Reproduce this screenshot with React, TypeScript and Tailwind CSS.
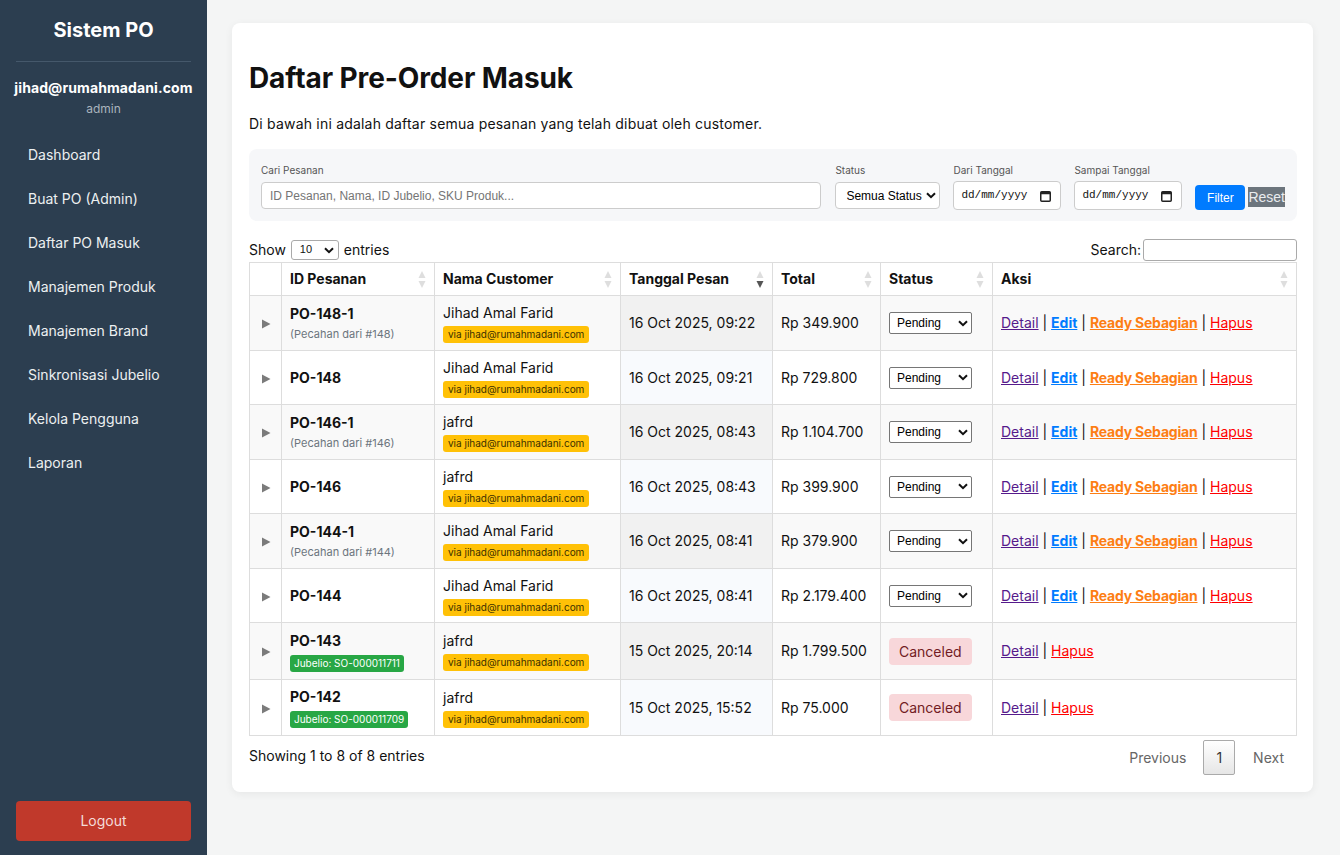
type Row = {
  id: string;
  sub?: string;
  jubelio?: string;
  name: string;
  date: string;
  total: string;
  canceled?: boolean;
  h: string;
};

const rows: Row[] = [
  { id: "PO-148-1", sub: "(Pecahan dari #148)", name: "Jihad Amal Farid", date: "16 Oct 2025, 09:22", total: "Rp 349.900", h: "h-[55px]" },
  { id: "PO-148", name: "Jihad Amal Farid", date: "16 Oct 2025, 09:21", total: "Rp 729.800", h: "h-[54px]" },
  { id: "PO-146-1", sub: "(Pecahan dari #146)", name: "jafrd", date: "16 Oct 2025, 08:43", total: "Rp 1.104.700", h: "h-[55px]" },
  { id: "PO-146", name: "jafrd", date: "16 Oct 2025, 08:43", total: "Rp 399.900", h: "h-[54px]" },
  { id: "PO-144-1", sub: "(Pecahan dari #144)", name: "Jihad Amal Farid", date: "16 Oct 2025, 08:41", total: "Rp 379.900", h: "h-[55px]" },
  { id: "PO-144", name: "Jihad Amal Farid", date: "16 Oct 2025, 08:41", total: "Rp 2.179.400", h: "h-[54px]" },
  { id: "PO-143", jubelio: "SO-000011711", name: "jafrd", date: "15 Oct 2025, 20:14", total: "Rp 1.799.500", canceled: true, h: "h-[57px]" },
  { id: "PO-142", jubelio: "SO-000011709", name: "jafrd", date: "15 Oct 2025, 15:52", total: "Rp 75.000", canceled: true, h: "h-[56px]" },
];

const menu = [
  "Dashboard",
  "Buat PO (Admin)",
  "Daftar PO Masuk",
  "Manajemen Produk",
  "Manajemen Brand",
  "Sinkronisasi Jubelio",
  "Kelola Pengguna",
  "Laporan",
];

function Chevron() {
  return (
    <svg width="10" height="7" viewBox="0 0 10 7" fill="none">
      <path d="M1 1.2 5 5.2 9 1.2" stroke="#111" strokeWidth="2" />
    </svg>
  );
}

function CalendarIcon() {
  return (
    <svg width="11" height="12" viewBox="0 0 11 12" fill="none">
      <rect x="0.75" y="1.75" width="9.5" height="9.5" rx="1" stroke="#222" strokeWidth="1.5" />
      <rect x="0.75" y="1.75" width="9.5" height="2.5" fill="#222" />
    </svg>
  );
}

function SortIcon({ active }: { active?: boolean }) {
  return (
    <svg width="8" height="17" viewBox="0 0 8 17">
      <path d="M4 0 7.5 7H0.5Z" fill="#dedede" />
      <path d="M4 17 7.5 10H0.5Z" fill={active ? "#555" : "#dedede"} />
    </svg>
  );
}

function DateField({ label }: { label: string }) {
  return (
    <div className="w-[108px] mb-[-1px]">
      <div className="text-[10px] leading-[14px] text-[#555]">{label}</div>
      <div className="mt-[4px] h-[29px] border border-[#ccc] rounded-[4px] bg-white flex items-center justify-between pl-[7px] pr-[9px]">
        <span className="font-['Liberation_Mono',monospace] text-[11px] text-[#111]">dd/mm/yyyy</span>
        <CalendarIcon />
      </div>
    </div>
  );
}

function Th({ children, active, sort = true, w }: { children?: React.ReactNode; active?: boolean; sort?: boolean; w: string }) {
  return (
    <th className={`${w} border border-[#ddd] px-2 text-left font-bold text-sm`}>
      <div className="flex items-center justify-between">
        <span>{children}</span>
        {sort && <SortIcon active={active} />}
      </div>
    </th>
  );
}

export default function App() {
  return (
    <div className="flex h-[855px] font-['Inter',sans-serif] text-[#111]">
      <aside className="w-[207px] shrink-0 bg-[#2c3e50] px-4 flex flex-col text-white">
        <div className="pt-4 text-xl leading-7 font-bold text-center">Sistem PO</div>
        <div className="mt-[17px] border-t border-[#45586b]" />
        <div className="mt-[16px] text-center text-sm leading-5 font-bold tracking-[0.1px] whitespace-nowrap -mx-3">jihad@rumahmadani.com</div>
        <div className="mt-[3px] text-center text-xs leading-4 text-[#aab4bd]">admin</div>
        <nav className="mt-[16px] flex flex-col">
          {menu.map((m) => (
            <a key={m} className="px-3 py-3 text-sm leading-5 text-[#ecf0f1]">
              {m}
            </a>
          ))}
        </nav>
        <button className="mt-auto mb-[14px] h-[40px] rounded-[4px] bg-[#c0392b] text-sm text-[#f4dcd9]">Logout</button>
      </aside>

      <main className="flex-1 bg-[#f4f5f5] pl-[25px] pr-[27px] pt-[23px]">
        <div className="bg-white rounded-lg shadow-[0_2px_8px_rgba(0,0,0,0.06)] pl-[17px] pr-4 pt-[38px] pb-[17px]">
          <h1 className="text-[28px] leading-[34px] font-bold tracking-[-0.1px]">Daftar Pre-Order Masuk</h1>
          <p className="mt-[19px] text-sm leading-5 tracking-[0.2px]">Di bawah ini adalah daftar semua pesanan yang telah dibuat oleh customer.</p>

          <div className="mt-[15px] bg-[#f6f7f9] rounded-lg px-3 pt-[14px] pb-[12px] flex items-end gap-[13px]">
            <div className="flex-1 mr-[1px]">
              <div className="text-[10px] leading-[14px] text-[#555]">Cari Pesanan</div>
              <div className="mt-[5px] h-[27px] border border-[#ccc] rounded-[4px] bg-white flex items-center px-2 font-['Liberation_Sans',Arial,sans-serif] text-xs text-[#757575]">
                ID Pesanan, Nama, ID Jubelio, SKU Produk...
              </div>
            </div>
            <div className="w-[105px]">
              <div className="text-[10px] leading-[14px] text-[#555]">Status</div>
              <div className="mt-[5px] h-[27px] border border-[#ccc] rounded-[4px] bg-white flex items-center justify-between pl-[10px] pr-[3px] font-['Liberation_Sans',Arial,sans-serif] text-xs text-black">
                <span>Semua Status</span>
                <Chevron />
              </div>
            </div>
            <DateField label="Dari Tanggal" />
            <DateField label="Sampai Tanggal" />
            <div className="flex items-end gap-[3px] mb-[-1px]">
              <button className="w-[50px] h-[25px] rounded-[4px] bg-[#007bff] text-white text-xs font-['Liberation_Sans',Arial,sans-serif]">Filter</button>
              <button className="h-[20px] mb-[3px] bg-[#6c757d] text-[#e9ecef] text-sm leading-[20px] font-['Liberation_Sans',Arial,sans-serif]">Reset</button>
            </div>
          </div>

          <div className="mt-[18px] flex items-center justify-between h-[22px] text-sm">
            <div className="flex items-center gap-[5px]">
              <span>Show</span>
              <div className="w-[48px] h-[20px] border border-[#aaa] rounded-[3px] flex items-center justify-between pl-[8px] pr-[4px] font-['Liberation_Sans',Arial,sans-serif] text-[11px]">
                <span>10</span>
                <Chevron />
              </div>
              <span>entries</span>
            </div>
            <div className="flex items-center gap-[2px]">
              <span>Search:</span>
              <div className="w-[154px] h-[22px] border border-[#aaa] rounded-[3px]" />
            </div>
          </div>

          <table className="mt-[1px] w-full table-fixed border-collapse text-sm">
            <thead>
              <tr className="h-[33px]">
                <th className="w-[32px] border border-[#ddd]" />
                <Th w="w-[153px]">ID Pesanan</Th>
                <Th w="w-[186px]">Nama Customer</Th>
                <Th w="w-[152px]" active>Tanggal Pesan</Th>
                <Th w="w-[108px]">Total</Th>
                <Th w="w-[112px]">Status</Th>
                <Th w="w-auto">Aksi</Th>
              </tr>
            </thead>
            <tbody>
              {rows.map((r, i) => {
                const odd = i % 2 === 0;
                return (
                  <tr key={r.id} className={`${r.h} ${odd ? "bg-[#f9f9f9]" : "bg-white"}`}>
                    <td className="border border-[#ddd] text-center align-middle">
                      <svg width="10" height="10" viewBox="0 0 10 10" className="inline-block">
                        <path d="M1 0.5 9.5 5 1 9.5Z" fill="#7b7b7b" />
                      </svg>
                    </td>
                    <td className="border border-[#ddd] px-2 align-middle">
                      <div className="font-bold leading-5">{r.id}</div>
                      {r.sub && <div className="mt-[2px] text-[11px] leading-4 text-[#6c757d]">{r.sub}</div>}
                      {r.jubelio && (
                        <span className="inline-block mt-[4px] rounded-[3px] bg-[#28a745] px-[4px] text-[10px] leading-[17px] text-white">
                          Jubelio: {r.jubelio}
                        </span>
                      )}
                    </td>
                    <td className="border border-[#ddd] px-2 align-middle">
                      <div className="leading-5">{r.name}</div>
                      <span className="inline-block mt-[2px] rounded-[3px] bg-[#ffc107] px-[5px] text-[10px] leading-[17px] text-[#3b3000]">
                        via jihad@rumahmadani.com
                      </span>
                    </td>
                    <td className={`border border-[#ddd] px-2 align-middle ${odd ? "bg-[#f1f1f1]" : "bg-[#f8fafd]"}`}>{r.date}</td>
                    <td className="border border-[#ddd] px-2 align-middle">{r.total}</td>
                    <td className="border border-[#ddd] px-2 align-middle">
                      {r.canceled ? (
                        <span className="inline-block rounded-[4px] bg-[#f8d7da] px-[10px] leading-[27px] text-[#721c24]">Canceled</span>
                      ) : (
                        <div className="w-[83px] h-[22px] border border-[#767676] rounded-[2px] bg-white flex items-center justify-between pl-[7px] pr-[3px] font-['Liberation_Sans',Arial,sans-serif] text-xs text-black">
                          <span>Pending</span>
                          <Chevron />
                        </div>
                      )}
                    </td>
                    <td className="border border-[#ddd] px-2 align-middle whitespace-nowrap">
                      <a className="underline text-[#551a8b]">Detail</a>
                      {" | "}
                      {!r.canceled && (
                        <>
                          <a className="underline font-bold text-[#007bff]">Edit</a>
                          {" | "}
                          <a className="underline font-bold text-[#fd7e14] tracking-[-0.2px]">Ready Sebagian</a>
                          {" | "}
                        </>
                      )}
                      <a className="underline text-[#ff0000]">Hapus</a>
                    </td>
                  </tr>
                );
              })}
            </tbody>
          </table>

          <div className="mt-[4px] flex items-start justify-between text-sm">
            <div className="pt-[6px] leading-5">Showing 1 to 8 of 8 entries</div>
            <div className="flex items-center">
              <span className="px-[14px] py-[7px] leading-[19px] text-[#666] border border-transparent">Previous</span>
              <span className="ml-[2px] px-[12px] py-[7px] leading-[19px] border border-[#aaa] rounded-[2px] bg-gradient-to-b from-white to-[#e6e6e6] text-[#333]">1</span>
              <span className="ml-[2px] pl-[15px] pr-[12px] py-[7px] leading-[19px] text-[#666] border border-transparent">Next</span>
            </div>
          </div>
        </div>
      </main>
    </div>
  );
}
